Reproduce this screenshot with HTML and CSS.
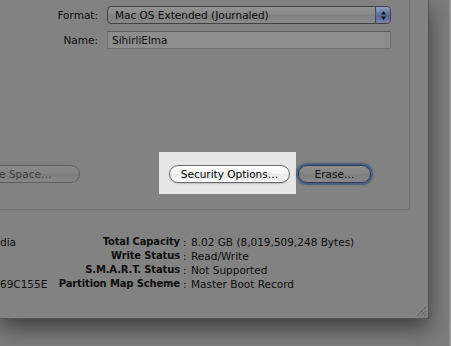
FILE: index.html
```html
<!DOCTYPE html>
<html>
    <head>
        <meta charset="utf-8" />
        <title>Disk Utility - Erase</title>
        <link rel="stylesheet" href="styles.css">
    </head>

    <body>
        <div class="m-window">
            <div class="panel">
                <div class="form">
                    <label class="lbl">Format:</label>
                    <div class="popup">
                        <span class="txt">Mac OS Extended (Journaled)</span>
                        <span class="stepper">
                            <svg width="7" height="11" viewBox="0 0 7 11"><path d="M3.5 1 L6 4.5 H1 Z M3.5 10 L6 6.5 H1 Z" fill="#111"/></svg>
                        </span>
                    </div>
                    <label class="lbl">Name:</label>
                    <div class="field">SihirliElma</div>
                </div>

                <div class="btns">
                    <span class="btn btn-dis">Erase Free Space…</span>
                    <div class="hilite">
                        <span class="btn btn-on">Security Options…</span>
                    </div>
                    <span class="btn btn-focus">Erase…</span>
                </div>
            </div>

            <div class="info">
                <span class="c1">dia</span><span class="k">Total Capacity</span><span class="sep">:</span><span class="v">8.02 GB (8,019,509,248 Bytes)</span>
                <span class="c1"></span><span class="k">Write Status</span><span class="sep">:</span><span class="v">Read/Write</span>
                <span class="c1"></span><span class="k">S.M.A.R.T. Status</span><span class="sep">:</span><span class="v">Not Supported</span>
                <span class="c1">69C155E</span><span class="k">Partition Map Scheme</span><span class="sep">:</span><span class="v">Master Boot Record</span>
            </div>

            <div class="grip">
                <svg width="11" height="11" viewBox="0 0 11 11"><path d="M10 1 L1 10 M10 4.5 L4.5 10 M10 8 L8 10" stroke="#3c3c3c" stroke-width="1" stroke-dasharray="1 1"/></svg>
            </div>
        </div>
    </body>
</html>
```

FILE: styles.css
```css
*{margin:0;padding:0;box-sizing:border-box;}
html,body{height:100%;}
body{background:#7c7c7c linear-gradient(to left,#979797 0,#979797 2px,transparent 2px);font-family:"DejaVu Sans",sans-serif;font-size:10.5px;color:#0e0e0e;overflow:hidden;}

.m-window{display:flex;flex-direction:column;width:429px;height:319px;background:#828282;border-right:1px solid #555;border-bottom:1px solid #555;box-shadow:0 9px 20px rgba(0,0,0,.5);}
.m-window .panel{display:flex;flex-direction:column;width:410px;height:210px;border-right:1px solid #747474;border-bottom:1px solid #747474;border-bottom-right-radius:3px;}

.form{display:grid;grid-template-columns:98px 284px;column-gap:9px;row-gap:7px;padding-top:6px;align-items:center;}
.form .lbl{text-align:right;}
.popup{display:flex;align-items:center;height:18px;border:1px solid #424242;border-radius:4px;background:linear-gradient(#939393,#868686 50%,#808080 51%,#8a8a8a);overflow:hidden;}
.popup .txt{flex:1;padding-left:7px;}
.popup .stepper{display:flex;align-items:center;justify-content:center;width:15px;height:100%;border-left:1px solid #3f4a66;background:linear-gradient(#8d9bbd,#61739c 50%,#52658f 51%,#7484ab);}
.field{height:18px;line-height:16px;padding-left:4px;border:1px solid #707070;border-top-color:#5c5c5c;background:#8d8d8d;}

.btns{display:flex;align-items:flex-start;margin-top:103px;}
.btn{display:block;height:18px;line-height:16px;border-radius:9px;text-align:center;white-space:nowrap;}
.btn-dis{width:158px;margin-left:-78px;margin-top:13px;border:1px solid #5e5e5e;background:linear-gradient(#8b8b8b,#828282 50%,#7d7d7d 51%,#878787);color:#3e3e3e;}
.hilite{margin-left:79px;padding:13px 6px 11px 10px;background:#e6e6e6;}
.btn-on{width:121px;border:1px solid #6a6a6a;background:linear-gradient(#ffffff,#f4f4f4 50%,#e9e9e9 51%,#fbfbfb);color:#000;box-shadow:0 1px 1px rgba(0,0,0,.15);}
.btn-focus{width:73px;margin-left:2px;margin-top:13px;border:1px solid #2c3c55;background:linear-gradient(#8d8d8d,#848484 50%,#7e7e7e 51%,#888888);box-shadow:0 0 0 2px rgba(55,85,130,.65),0 0 3px 2px rgba(55,85,130,.35);}

.info{display:grid;grid-template-columns:56px 124px 11px auto;line-height:14px;margin-top:25px;}
.info .k{display:flex;justify-content:flex-end;white-space:nowrap;font-weight:bold;font-size:10px;letter-spacing:-0.15px;}
.info .sep{padding-left:3px;}
.info .c1{white-space:nowrap;}

.grip{display:flex;justify-content:flex-end;margin-top:auto;padding:0 1px 1px 0;}
.grip svg{display:block;}
```
